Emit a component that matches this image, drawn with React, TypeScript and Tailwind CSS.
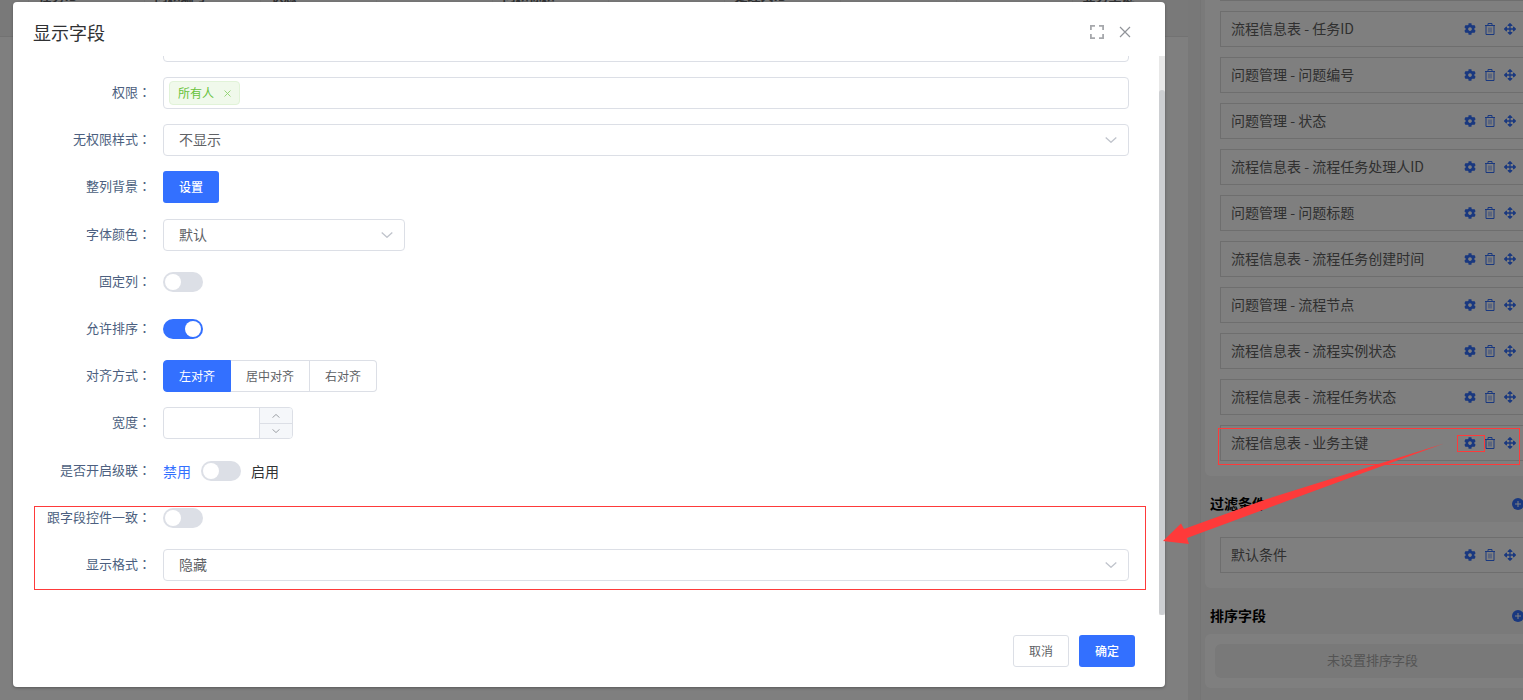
import React, { useState } from 'react';
import { FaArrowsAlt, FaCog } from 'react-icons/fa';

const displayFields = [
  '流程信息表 - 流程实例ID',
  '流程信息表 - 任务ID',
  '问题管理 - 问题编号',
  '问题管理 - 状态',
  '流程信息表 - 流程任务处理人ID',
  '问题管理 - 问题标题',
  '流程信息表 - 流程任务创建时间',
  '问题管理 - 流程节点',
  '流程信息表 - 流程实例状态',
  '流程信息表 - 流程任务状态',
  '流程信息表 - 业务主键',
];

const tableHeaders = ['任务ID', '问题编号', '状态', '', '问题标题', '', '处理人ID', '', '', '业务主键'];

const alignOptions = [
  { value: 'left', label: '左对齐' },
  { value: 'center', label: '居中对齐' },
  { value: 'right', label: '右对齐' },
];

const TrashIcon = () => (
  <svg viewBox="0 0 12 12" className="h-3 w-3" fill="none" stroke="currentColor">
    <path d="M1 2.5h10M4 2.5v-2h4v2M2 2.5v9h8v-9" />
    <path d="M5 4.5v5M7 4.5v5" strokeOpacity="0.7" />
  </svg>
);

const PlusIcon = () => (
  <svg viewBox="0 0 12 12" className="h-3 w-3">
    <circle cx="6" cy="6" r="6" fill="#3370ff" />
    <path d="M6 3v6M3 6h6" stroke="#fff" />
  </svg>
);

const ChevronIcon = ({ className }: { className: string }) => (
  <svg viewBox="0 0 12 6" className={className} fill="none" stroke="currentColor" strokeWidth="1.3">
    <path d="M0.7 0.5L6 5.3L11.3 0.5" />
  </svg>
);

interface FieldItemProps {
  name: string;
}

const FieldItem: React.FC<FieldItemProps> = ({ name }) => (
  <li className="flex h-9 items-center justify-between border border-[#dcdcdc] pl-[10px] pr-2">
    <span className="pb-0.5 text-sm text-[#606060]">{name}</span>
    <span className="flex items-center gap-2 text-[#3370ff]">
      <button type="button" aria-label="设置"><FaCog className="h-3 w-3" /></button>
      <button type="button" aria-label="删除"><TrashIcon /></button>
      <button type="button" aria-label="移动"><FaArrowsAlt className="h-3 w-3" /></button>
    </span>
  </li>
);

const SectionHeader: React.FC<{ title: string }> = ({ title }) => (
  <div className="flex h-[46px] items-center justify-between pl-[5px] pr-4 pt-[10px]">
    <h2 className="pb-0.5 text-sm font-bold text-black">{title}</h2>
    <button type="button" aria-label="添加"><PlusIcon /></button>
  </div>
);

interface FormRowProps {
  label: string;
  htmlFor?: string;
  children: React.ReactNode;
}

const FormRow: React.FC<FormRowProps> = ({ label, htmlFor, children }) => (
  <div className="flex h-8">
    <label htmlFor={htmlFor} className="w-[130px] shrink-0 pr-3 text-right text-[13px] leading-[29px] text-[#4c5f80]">
      {label}
      <span className="font-['Noto_Sans_CJK_TC']" lang="zh-TW">{'\uff1a'}</span>
    </label>
    <div className="flex min-w-0 flex-1 items-center">{children}</div>
  </div>
);

interface SelectBoxProps {
  id: string;
  value: string;
  className: string;
}

const SelectBox: React.FC<SelectBoxProps> = ({ id, value, className }) => (
  <div className={`relative h-8 ${className}`}>
    <select id={id} className="h-8 w-full appearance-none rounded border border-[#dcdfe6] bg-white px-[15px] pb-0.5 text-sm text-[#606266]">
      <option>{value}</option>
    </select>
    <ChevronIcon className="pointer-events-none absolute right-3 top-[13px] h-[6px] w-3 text-[#c0c4cc]" />
  </div>
);

const Switch: React.FC<{ id: string; defaultChecked?: boolean }> = ({ id, defaultChecked }) => (
  <input
    id={id}
    type="checkbox"
    role="switch"
    defaultChecked={defaultChecked}
    className="flex h-5 w-10 shrink-0 appearance-none items-center rounded-full bg-[#dcdfe6] px-[2px] before:h-4 before:w-4 before:rounded-full before:bg-white checked:justify-end checked:bg-[#3370ff]"
  />
);

const Background = () => (
  <div className="flex h-full overflow-hidden bg-[#f0f0f0]">
    <main className="min-w-0 flex-1 overflow-hidden bg-white">
      <table className="-mt-[20px] w-full table-fixed bg-[#f2f2f2]">
        <thead>
          <tr className="h-14 border-b border-[#e4e4e4] align-top">
            <th className="w-7" />
            {tableHeaders.map((header, index) => (
              <th key={index} className="border-l border-[#e8e8e8] px-[10px] pt-[6px] text-left text-[13px] leading-5 font-bold text-[#606266]">
                {header}
              </th>
            ))}
          </tr>
        </thead>
      </table>
    </main>
    <aside className="-mr-[21px] ml-3 w-[344px] shrink-0 border-l border-[#ebebeb] bg-[#f5f5f5] px-1">
      <div className="-mt-[50px]">
        <ul className="flex flex-col gap-[10px] rounded-md bg-white p-[15px]">
          {displayFields.map((field) => <FieldItem key={field} name={field} />)}
        </ul>
        <SectionHeader title="过滤条件" />
        <ul className="rounded-md bg-white p-[15px]">
          <FieldItem name="默认条件" />
        </ul>
        <SectionHeader title="排序字段" />
        <div className="rounded-md bg-white p-[10px]">
          <p className="rounded-md bg-[#f2f2f2] pb-0.5 text-center text-[13px] leading-8 text-[#a8a8a8]">未设置排序字段</p>
        </div>
      </div>
    </aside>
  </div>
);

const FieldDialog = () => {
  const [align, setAlign] = useState('left');

  return (
    <section role="dialog" aria-labelledby="dialog-title" className="flex h-full flex-col rounded bg-white shadow-[0_1px_3px_rgba(0,0,0,0.3)]">
      <header className="flex h-[54px] shrink-0 items-center justify-between pl-5 pr-[34px] pt-[6px]">
        <h1 id="dialog-title" className="text-lg text-[#303133]">显示字段</h1>
        <div className="flex items-center gap-[15px]">
          <button type="button" aria-label="全屏">
            <svg viewBox="0 0 14 14" className="h-[14px] w-[14px]" fill="none" stroke="#a6a8ac" strokeWidth="1.8">
              <path d="M0.9 5V0.9H5M9 0.9h4.1V5M13.1 9v4.1H9M5 13.1H0.9V9" />
            </svg>
          </button>
          <button type="button" aria-label="关闭">
            <svg viewBox="0 0 12 12" className="h-3 w-3" fill="none" stroke="#909399" strokeWidth="1.2">
              <path d="M1 1l10 10M11 1L1 11" />
            </svg>
          </button>
        </div>
      </header>

      <div className="flex min-h-0 flex-1 overflow-hidden">
        <div className="flex min-w-0 flex-1 flex-col pb-[34px] pl-5 pr-[30px]">
          <input aria-label="名称" className="-mt-[26px] mb-[15px] ml-[130px] h-8 shrink-0 rounded border border-[#dcdfe6]" />
          <form className="relative flex flex-1 flex-col justify-between">
            <FormRow label="权限">
              <div className="flex h-8 w-full items-center rounded border border-[#dcdfe6] px-[5px]">
                <span className="flex h-6 items-center gap-[10px] rounded border border-[#e1f3d8] bg-[#f0f9eb] px-2 text-xs text-[#67c23a]">
                  所有人
                  <button type="button" aria-label="移除">
                    <svg viewBox="0 0 7 7" className="h-[7px] w-[7px]" fill="none" stroke="#8fd16e" strokeWidth="0.9">
                      <path d="M0.5 0.5l6 6M6.5 0.5l-6 6" />
                    </svg>
                  </button>
                </span>
              </div>
            </FormRow>
            <FormRow label="无权限样式" htmlFor="no-auth-style">
              <SelectBox id="no-auth-style" value="不显示" className="w-full" />
            </FormRow>
            <FormRow label="整列背景">
              <button type="button" className="h-8 w-14 rounded-[3px] bg-[#3370ff] text-xs font-medium text-white">设置</button>
            </FormRow>
            <FormRow label="字体颜色" htmlFor="font-color">
              <SelectBox id="font-color" value="默认" className="w-[242px]" />
            </FormRow>
            <FormRow label="固定列" htmlFor="fixed-column">
              <Switch id="fixed-column" />
            </FormRow>
            <FormRow label="允许排序" htmlFor="sortable">
              <Switch id="sortable" defaultChecked />
            </FormRow>
            <FormRow label="对齐方式">
              {alignOptions.map((option) => (
                <label
                  key={option.value}
                  className="relative flex h-8 items-center border border-l-0 border-[#dcdfe6] px-[15px] text-xs text-[#606266] first:rounded-l first:border-l last:rounded-r has-checked:border-[#3370ff] has-checked:bg-[#3370ff] has-checked:text-white"
                >
                  <input
                    type="radio"
                    name="align"
                    value={option.value}
                    checked={align === option.value}
                    onChange={() => setAlign(option.value)}
                    className="sr-only"
                  />
                  {option.label}
                </label>
              ))}
            </FormRow>
            <FormRow label="宽度" htmlFor="width">
              <div className="flex h-8 w-[130px] overflow-hidden rounded border border-[#dcdfe6]">
                <input id="width" type="text" className="min-w-0 flex-1 px-2 text-center text-sm outline-none" />
                <div className="flex w-[33px] flex-col border-l border-[#dcdfe6] bg-[#f5f7fa] text-[#909399]">
                  <button type="button" aria-label="增加" className="flex flex-1 items-center justify-center border-b border-[#dcdfe6]">
                    <ChevronIcon className="h-1 w-2 rotate-180" />
                  </button>
                  <button type="button" aria-label="减少" className="flex flex-1 items-center justify-center">
                    <ChevronIcon className="h-1 w-2" />
                  </button>
                </div>
              </div>
            </FormRow>
            <FormRow label="是否开启级联" htmlFor="cascade">
              <div className="flex items-center gap-[10px] text-sm text-[#303133]">
                <span className="text-[#3370ff]">禁用</span>
                <Switch id="cascade" />
                <span>启用</span>
              </div>
            </FormRow>
            <FormRow label="跟字段控件一致" htmlFor="same-as-control">
              <Switch id="same-as-control" />
            </FormRow>
            <FormRow label="显示格式" htmlFor="display-format">
              <SelectBox id="display-format" value="隐藏" className="w-full" />
            </FormRow>
            <div className="pointer-events-none absolute -bottom-[9px] -right-[17px] left-px h-[84px] border border-[#fe3a3a]" />
          </form>
        </div>
        <div className="w-[6px] bg-[#e8e8e8] pt-[34px]">
          <div className="h-full rounded-[3px] bg-[#cdcfd2]" />
        </div>
      </div>

      <footer className="flex shrink-0 justify-end gap-[10px] px-[30px] py-5">
        <button type="button" className="h-8 w-14 rounded-[3px] border border-[#dcdfe6] bg-white text-xs text-[#606266]">取消</button>
        <button type="button" className="h-8 w-14 rounded-[3px] bg-[#3370ff] text-xs font-medium text-white">确定</button>
      </footer>
    </section>
  );
};

const Annotations = () => (
  <>
    <div className="pointer-events-none absolute right-[3px] top-[428px] h-[37px] w-[302px] border border-[#fe3a3a]" />
    <div className="pointer-events-none absolute right-[38px] top-[435px] h-[17px] w-7 border border-[#fe3a3a]" />
    <svg viewBox="0 0 281 101" className="pointer-events-none absolute right-[79px] top-[443px] h-[101px] w-[281px]">
      <path d="M0 98L18 80.5L21 86L104 56L281 0.5L200 30L24 95L26 101Z" fill="#fe3a3a" />
    </svg>
  </>
);

const App = () => (
  <div className="relative h-screen overflow-hidden font-['Noto_Sans_CJK_SC',sans-serif]">
    <Background />
    <div className="absolute inset-0 bg-black/50 pb-[13px] pl-[13px] pr-[358px] pt-[2px]">
      <FieldDialog />
    </div>
    <Annotations />
  </div>
);

export default App;
